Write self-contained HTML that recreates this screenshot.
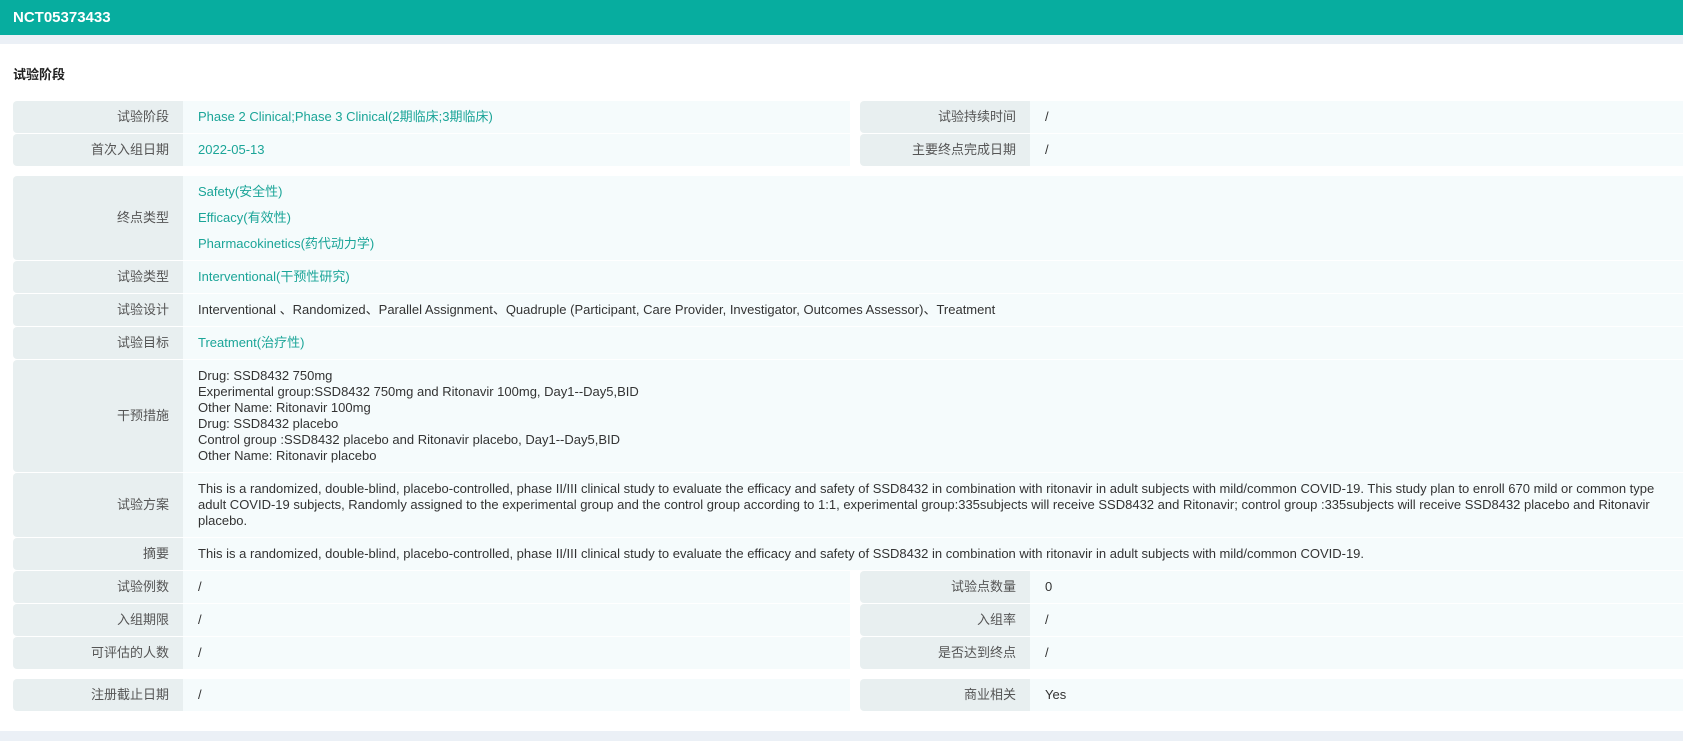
<!DOCTYPE html>
<html><head><meta charset="utf-8"><style>
*{margin:0;padding:0;box-sizing:border-box}
body{width:1683px;height:741px;background:#ebf0f6;font-family:"Liberation Sans","Noto Sans CJK SC",sans-serif;font-size:13px;color:#333;overflow:hidden;position:relative}
.hdr{position:absolute;left:0;top:0;width:1683px;height:35px;background:#07ad9f;color:#fff;font-weight:bold;font-size:15px;line-height:35px;padding-left:13px}
.panel{position:absolute;left:0;top:44px;width:1683px;height:687px;background:#fff}
.title{position:absolute;left:13px;top:64px;font-weight:bold;font-size:13px;color:#222}
.row{position:absolute;left:13px;display:flex}
.l{background:#e8eff0;color:#555;text-align:right;padding-right:14px;width:170px;border-radius:4px 0 0 4px;display:flex;align-items:center;justify-content:flex-end;line-height:16px}
.v{background:#f5fbfc;padding-left:15px;display:flex;align-items:center;white-space:nowrap;line-height:16px}
.t{color:#1ba598}
</style></head><body>
<div class="hdr">NCT05373433</div>
<div class="panel"></div>
<div class="title">试验阶段</div>

<div class="row" style="top:101px;height:32px"><div class="l"><span>试验阶段</span></div><div class="v t" style="width:667px">Phase 2 Clinical;Phase 3 Clinical(2期临床;3期临床)</div></div>
<div class="row" style="top:134px;height:32px"><div class="l"><span>首次入组日期</span></div><div class="v t" style="width:667px">2022-05-13</div></div>
<div class="row" style="top:101px;height:32px;left:860px"><div class="l"><span>试验持续时间</span></div><div class="v" style="width:653px">/</div></div>
<div class="row" style="top:134px;height:32px;left:860px"><div class="l"><span>主要终点完成日期</span></div><div class="v" style="width:653px">/</div></div>

<div class="row" style="top:176px;height:84px"><div class="l"><span>终点类型</span></div><div class="v t" style="width:1500px;line-height:26px;display:block;padding-top:3px">Safety(安全性)<br>Efficacy(有效性)<br>Pharmacokinetics(药代动力学)</div></div>
<div class="row" style="top:261px;height:32px"><div class="l"><span>试验类型</span></div><div class="v t" style="width:1500px">Interventional(干预性研究)</div></div>
<div class="row" style="top:294px;height:32px"><div class="l"><span>试验设计</span></div><div class="v" style="width:1500px">Interventional 、Randomized、Parallel Assignment、Quadruple (Participant, Care Provider, Investigator, Outcomes Assessor)、Treatment</div></div>
<div class="row" style="top:327px;height:32px"><div class="l"><span>试验目标</span></div><div class="v t" style="width:1500px">Treatment(治疗性)</div></div>
<div class="row" style="top:360px;height:112px"><div class="l"><span>干预措施</span></div><div class="v" style="width:1500px;line-height:16px">Drug: SSD8432 750mg<br>Experimental group:SSD8432 750mg and Ritonavir 100mg, Day1--Day5,BID<br>Other Name: Ritonavir 100mg<br>Drug: SSD8432 placebo<br>Control group :SSD8432 placebo and Ritonavir placebo, Day1--Day5,BID<br>Other Name: Ritonavir placebo</div></div>
<div class="row" style="top:473px;height:64px"><div class="l"><span>试验方案</span></div><div class="v" style="width:1500px;line-height:16px">This is a randomized, double-blind, placebo-controlled, phase II/III clinical study to evaluate the efficacy and safety of SSD8432 in combination with ritonavir in adult subjects with mild/common COVID-19. This study plan to enroll 670 mild or common type<br>adult COVID-19 subjects, Randomly assigned to the experimental group and the control group according to 1:1, experimental group:335subjects will receive SSD8432 and Ritonavir; control group :335subjects will receive SSD8432 placebo and Ritonavir<br>placebo.</div></div>
<div class="row" style="top:538px;height:32px"><div class="l"><span>摘要</span></div><div class="v" style="width:1500px">This is a randomized, double-blind, placebo-controlled, phase II/III clinical study to evaluate the efficacy and safety of SSD8432 in combination with ritonavir in adult subjects with mild/common COVID-19.</div></div>

<div class="row" style="top:571px;height:32px"><div class="l"><span>试验例数</span></div><div class="v" style="width:667px">/</div></div>
<div class="row" style="top:604px;height:32px"><div class="l"><span>入组期限</span></div><div class="v" style="width:667px">/</div></div>
<div class="row" style="top:637px;height:32px"><div class="l"><span>可评估的人数</span></div><div class="v" style="width:667px">/</div></div>
<div class="row" style="top:571px;height:32px;left:860px"><div class="l"><span>试验点数量</span></div><div class="v" style="width:653px">0</div></div>
<div class="row" style="top:604px;height:32px;left:860px"><div class="l"><span>入组率</span></div><div class="v" style="width:653px">/</div></div>
<div class="row" style="top:637px;height:32px;left:860px"><div class="l"><span>是否达到终点</span></div><div class="v" style="width:653px">/</div></div>

<div class="row" style="top:679px;height:32px"><div class="l"><span>注册截止日期</span></div><div class="v" style="width:667px">/</div></div>
<div class="row" style="top:679px;height:32px;left:860px"><div class="l"><span>商业相关</span></div><div class="v" style="width:653px">Yes</div></div>
</body></html>
